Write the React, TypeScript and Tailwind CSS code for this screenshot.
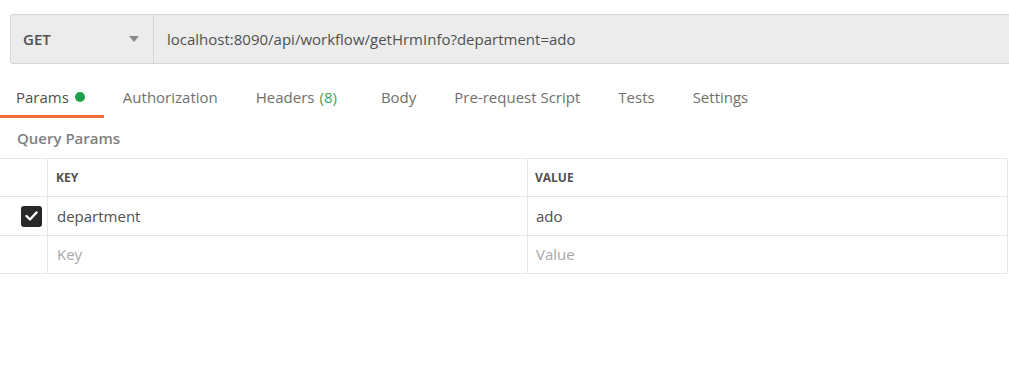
import React from "react";

const font = { fontFamily: '"Open Sans", "Noto Sans", Arial, sans-serif' };

export default function App() {
  const tabs = [
    { label: "Authorization" },
    { label: "Headers", count: "(8)" },
    { label: "Body" },
    { label: "Pre-request Script" },
    { label: "Tests" },
    { label: "Settings" },
  ];
  return (
    <div className="w-[1009px] h-[377px] overflow-hidden bg-white text-[#505050]" style={font}>
      {/* Request bar */}
      <div className="pt-[14px] pl-[10px]">
        <div className="flex w-[1030px] h-[50px] border border-[#d4d4d4] rounded-l-[3px] bg-[#ececec]">
          <div className="w-[143px] flex items-center justify-between pl-[12px] pr-[14px] border-r border-[#d4d4d4]">
            <span className="text-[15px] font-semibold text-[#505050]">GET</span>
            <svg width="10" height="6" viewBox="0 0 10 6">
              <path d="M0 0 L10 0 L5 6 Z" fill="#8a8a8a" />
            </svg>
          </div>
          <div className="flex-1 flex items-center pl-[13px] text-[15px] text-[#505050]">
            localhost:8090/api/workflow/getHrmInfo?department=ado
          </div>
        </div>
      </div>

      {/* Tabs */}
      <div className="flex">
        <div className="flex items-center pl-4 pr-[19px] pt-[23px] pb-[8px] border-b-[3px] border-[#f26b3a] text-[15px] leading-[20px] text-[#505050]">
          Params
          <span className="ml-[6px] w-[10px] h-[10px] rounded-full bg-[#1fa04a]" />
        </div>
        {tabs.map((t) => (
          <div key={t.label} className="flex items-center px-[19px] pt-[23px] pb-[8px] border-b-[3px] border-transparent text-[15px] leading-[20px] text-[#707070]">
            {t.label}
            {t.count && <span className="ml-[5px] mr-[6px] text-[#3aa55a]">{t.count}</span>}
          </div>
        ))}
      </div>

      {/* Query Params */}
      <div className="pl-[17px] py-[11px] text-[15px] leading-[18px] font-semibold text-[#808080]">Query Params</div>

      {/* Table */}
      <div className="w-[1008px] border-t border-r border-[#e6e6e6]">
        <div className="flex h-[38px] border-b border-[#e6e6e6]">
          <div className="w-[48px] border-r border-[#e6e6e6]" />
          <div className="w-[480px] border-r border-[#e6e6e6] flex items-center pl-[8px] text-[12px] font-bold text-[#505050]">KEY</div>
          <div className="flex-1 flex items-center pl-[7px] text-[12px] font-bold text-[#505050]">VALUE</div>
        </div>
        <div className="flex h-[39px] border-b border-[#e6e6e6]">
          <div className="w-[48px] border-r border-[#e6e6e6] flex items-center pl-[21px]">
            <div className="w-[21px] h-[21px] rounded-[3px] bg-[#282828] flex items-center justify-center">
              <svg width="13" height="10" viewBox="0 0 13 10">
                <path d="M1.5 5 L5 8.5 L11.5 1.5" fill="none" stroke="#fff" strokeWidth="2.4" strokeLinecap="round" strokeLinejoin="round" />
              </svg>
            </div>
          </div>
          <div className="w-[480px] border-r border-[#e6e6e6] flex items-center pl-[9px] text-[15px] text-[#505050]">department</div>
          <div className="flex-1 flex items-center pl-[8px] text-[15px] text-[#505050]">ado</div>
        </div>
        <div className="flex h-[38px] border-b border-[#e6e6e6]">
          <div className="w-[48px] border-r border-[#e6e6e6]" />
          <div className="w-[480px] border-r border-[#e6e6e6] flex items-center pl-[9px] text-[15px] text-[#a8a8a8]">Key</div>
          <div className="flex-1 flex items-center pl-[8px] text-[15px] text-[#a8a8a8]">Value</div>
        </div>
      </div>
    </div>
  );
}
